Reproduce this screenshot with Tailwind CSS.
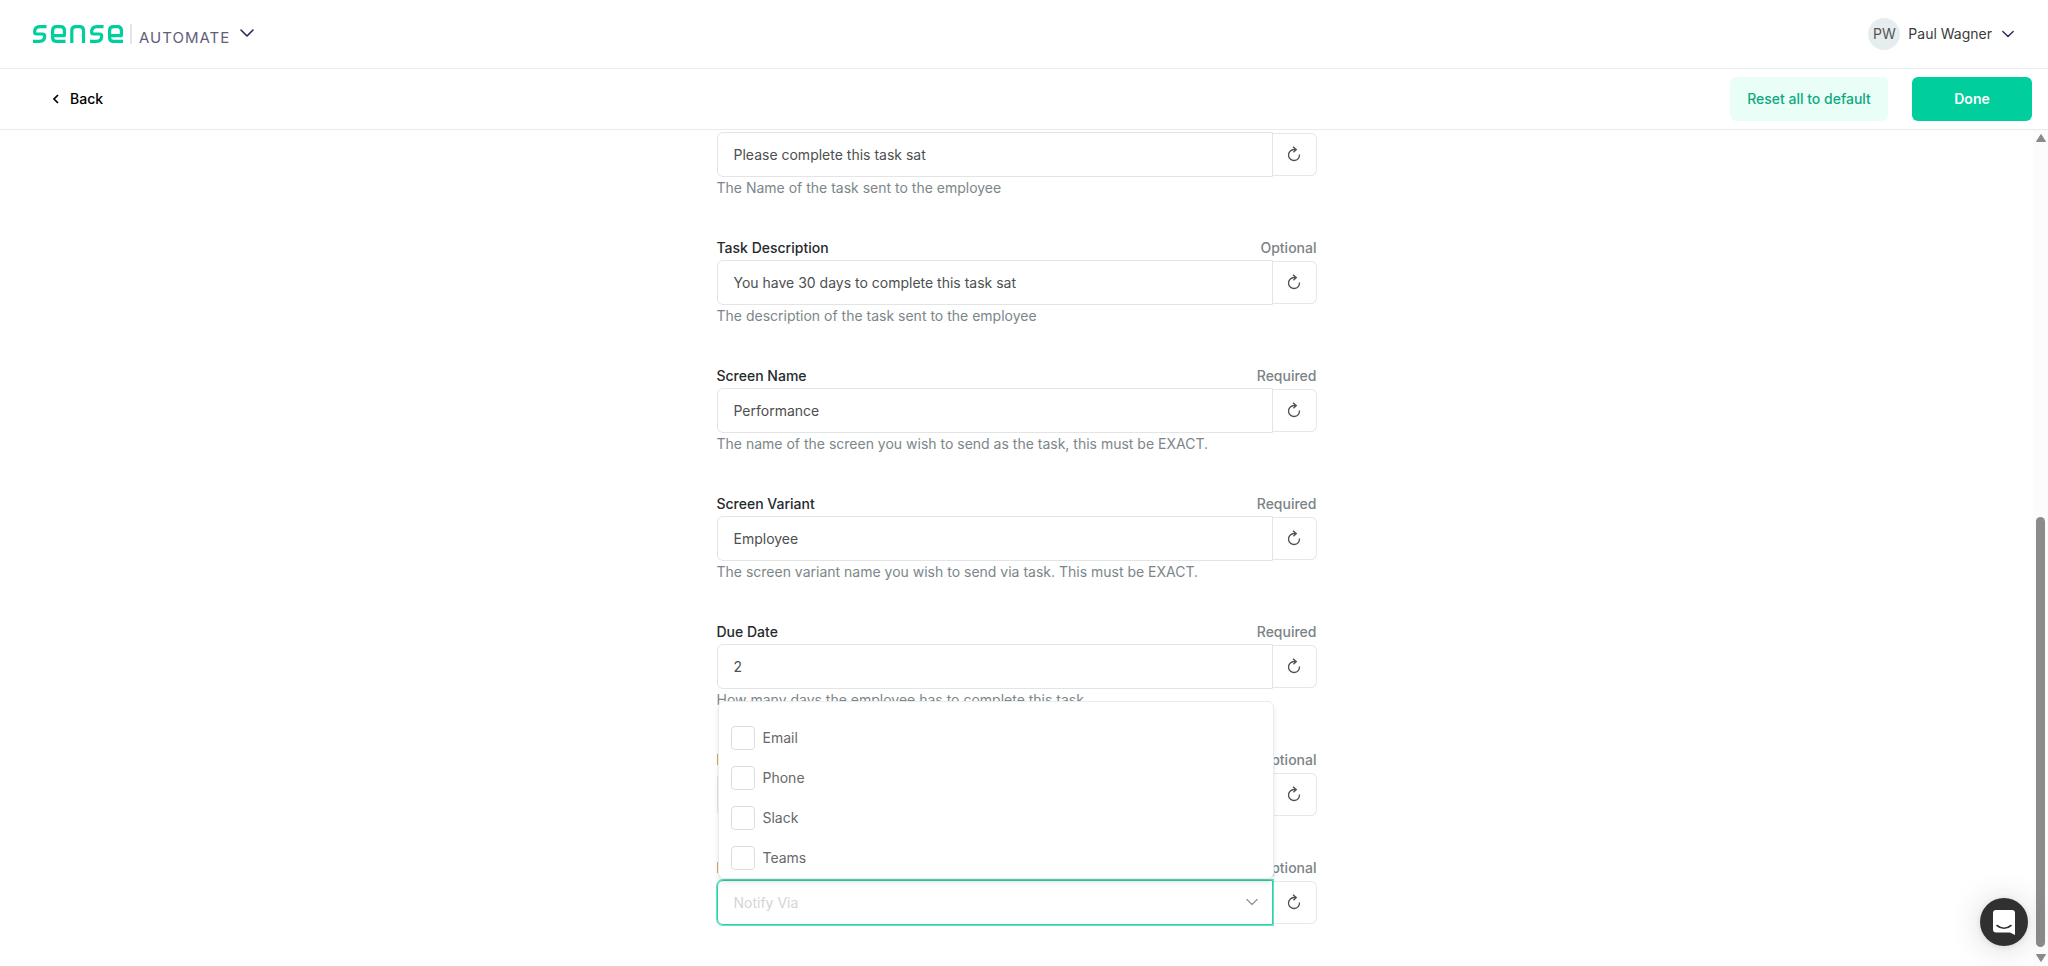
<!DOCTYPE html>
<html lang="en">
<head>
    <meta charset="UTF-8">
    <meta name="viewport" content="width=device-width, initial-scale=1.0">
    <title>Sense Automate</title>
    <script src="https://cdn.jsdelivr.net/npm/@tailwindcss/browser@4"></script>
</head>
<body class="bg-white font-['Inter',sans-serif] text-sm text-[#4d4f50]">
    <!-- shared icons -->
    <svg class="hidden">
        <symbol id="reset" viewBox="0 0 14 16">
            <path d="M8.500 3.500H7A5.500 5.500 0 1 0 12.500 8.500" fill="none" stroke="currentColor" stroke-width="1.3"/>
            <path d="M6 .8 9.200 3.500 6.500 6.200" fill="none" stroke="currentColor" stroke-width="1.4"/>
        </symbol>
        <symbol id="chevron" viewBox="0 0 14 8">
            <path d="M1 1l6 6 6-6" fill="none" stroke="currentColor" stroke-width="1.6" stroke-linecap="round" stroke-linejoin="round"/>
        </symbol>
    </svg>

    <div class="flex flex-col h-screen overflow-hidden">
        <header class="flex items-center justify-between h-[69px] shrink-0 border-b border-[#e5eef2] pl-8 pr-[34px]">
            <button class="flex items-center" aria-label="Switch product">
                <svg class="w-[92px] h-5" viewBox="0 0 92 20" fill="none" stroke="#00ce9c" stroke-width="3.2" stroke-linejoin="round">
                    <path d="M14.500 2.600H8Q2.600 2.600 2.600 8Q2.600 10 4.800 10H10.500Q12.700 10 12.700 12Q12.700 17.400 7.500 17.400H1"/>
                    <path d="M21 11.600H32.400V6.500Q32.400 2.600 28.500 2.600H24.500Q20.600 2.600 20.600 6.500V13.500Q20.600 17.400 24.500 17.400H33.500"/>
                    <path d="M39.800 19V6.500Q39.800 2.600 43.700 2.600H47.600Q51.500 2.600 51.500 6.500V19"/>
                    <path d="M71.500 2.600H65Q59.600 2.600 59.600 8Q59.600 10 61.800 10H67.500Q69.700 10 69.700 12Q69.700 17.400 64.500 17.400H58"/>
                    <path d="M78 11.600H89.400V6.500Q89.400 2.600 85.500 2.600H81.500Q77.600 2.600 77.600 6.500V13.500Q77.600 17.400 81.500 17.400H91"/>
                </svg>
                <span class="ml-1.5 w-0.5 h-5 bg-[#e4e4ec]"></span>
                <span class="ml-[7px] mt-2 text-[15px] leading-5 tracking-[1px] text-[#625d7a]">AUTOMATE</span>
                <svg class="ml-2.5 mb-0.5 w-3.5 h-2 text-[#2d2653]"><use href="#chevron"/></svg>
            </button>
            <button class="flex items-center text-[#3b3b3b]">
                <span class="flex items-center justify-center size-8 rounded-full bg-[#e5edef] text-[#555]">PW</span>
                <span class="ml-2">Paul Wagner</span>
                <svg class="ml-2.5 w-3 h-2 text-[#2d2653]"><use href="#chevron"/></svg>
            </button>
        </header>

        <nav class="flex items-center justify-between h-[61px] shrink-0 border-b border-[#e8eaeb] pl-[52px] pr-4">
            <a href="#" class="flex items-center gap-[11px] font-medium text-black">
                <svg class="w-[7px] h-2.5" viewBox="0 0 7 10"><path d="M6 1 2 5l4 4" fill="none" stroke="currentColor" stroke-width="1.7"/></svg>
                Back
            </a>
            <div class="flex gap-6">
                <button class="h-11 w-[158px] rounded-md bg-[#e9fef6] font-medium text-[#0fa981]">Reset all to default</button>
                <button class="h-11 w-[120px] rounded-md bg-[#00ce9c] font-semibold text-white">Done</button>
            </div>
        </nav>

        <div class="flex flex-1 min-h-0">
            <main class="flex flex-1 flex-col justify-end items-center overflow-hidden pb-[41px]">
                <form class="w-full max-w-[600px] leading-[22px]">
                    <div class="mb-[38px]">
                        <div class="flex items-center">
                            <input id="taskName" type="text" aria-label="Task Name" value="Please complete this task sat" class="flex-1 h-[45px] rounded-l-md border border-[#e3e4e4] px-4">
                            <button type="button" aria-label="Reset" class="flex items-center justify-center w-11 h-[43px] rounded-r-md border border-l-0 border-[#e6e7e7] pb-0.5"><svg class="w-3.5 h-4"><use href="#reset"/></svg></button>
                        </div>
                        <p class="text-[#7c8689]">The Name of the task sent to the employee</p>
                    </div>

                    <div class="mb-[38px]">
                        <div class="flex justify-between mb-px"><label for="taskDescription" class="font-medium text-[#262a2c]">Task Description</label><span class="font-medium text-[#7c8386]">Optional</span></div>
                        <div class="flex items-center">
                            <input id="taskDescription" type="text" value="You have 30 days to complete this task sat" class="flex-1 h-[45px] rounded-l-md border border-[#e3e4e4] px-4">
                            <button type="button" aria-label="Reset" class="flex items-center justify-center w-11 h-[43px] rounded-r-md border border-l-0 border-[#e6e7e7] pb-0.5"><svg class="w-3.5 h-4"><use href="#reset"/></svg></button>
                        </div>
                        <p class="text-[#7c8689]">The description of the task sent to the employee</p>
                    </div>

                    <div class="mb-[38px]">
                        <div class="flex justify-between mb-px"><label for="screenName" class="font-medium text-[#262a2c]">Screen Name</label><span class="font-medium text-[#7c8386]">Required</span></div>
                        <div class="flex items-center">
                            <input id="screenName" type="text" value="Performance" class="flex-1 h-[45px] rounded-l-md border border-[#e3e4e4] px-4">
                            <button type="button" aria-label="Reset" class="flex items-center justify-center w-11 h-[43px] rounded-r-md border border-l-0 border-[#e6e7e7] pb-0.5"><svg class="w-3.5 h-4"><use href="#reset"/></svg></button>
                        </div>
                        <p class="text-[#7c8689]">The name of the screen you wish to send as the task, this must be EXACT.</p>
                    </div>

                    <div class="mb-[38px]">
                        <div class="flex justify-between mb-px"><label for="screenVariant" class="font-medium text-[#262a2c]">Screen Variant</label><span class="font-medium text-[#7c8386]">Required</span></div>
                        <div class="flex items-center">
                            <input id="screenVariant" type="text" value="Employee" class="flex-1 h-[45px] rounded-l-md border border-[#e3e4e4] px-4">
                            <button type="button" aria-label="Reset" class="flex items-center justify-center w-11 h-[43px] rounded-r-md border border-l-0 border-[#e6e7e7] pb-0.5"><svg class="w-3.5 h-4"><use href="#reset"/></svg></button>
                        </div>
                        <p class="text-[#7c8689]">The screen variant name you wish to send via task. This must be EXACT.</p>
                    </div>

                    <div class="mb-[38px]">
                        <div class="flex justify-between mb-px"><label for="dueDate" class="font-medium text-[#262a2c]">Due Date</label><span class="font-medium text-[#7c8386]">Required</span></div>
                        <div class="flex items-center">
                            <input id="dueDate" type="text" value="2" class="flex-1 h-[45px] rounded-l-md border border-[#e3e4e4] px-4">
                            <button type="button" aria-label="Reset" class="flex items-center justify-center w-11 h-[43px] rounded-r-md border border-l-0 border-[#e6e7e7] pb-0.5"><svg class="w-3.5 h-4"><use href="#reset"/></svg></button>
                        </div>
                        <p class="text-[#7c8689]">How many days the employee has to complete this task</p>
                    </div>

                    <div class="mb-10">
                        <div class="flex justify-between mb-px"><label for="reminder" class="font-medium text-[#262a2c]">Reminder</label><span class="font-medium text-[#7c8386]">Optional</span></div>
                        <div class="flex items-center">
                            <input id="reminder" type="text" class="flex-1 h-[45px] rounded-l-md border border-[#e3e4e4] px-4">
                            <button type="button" aria-label="Reset" class="flex items-center justify-center w-11 h-[43px] rounded-r-md border border-l-0 border-[#e6e7e7] pb-0.5"><svg class="w-3.5 h-4"><use href="#reset"/></svg></button>
                        </div>
                    </div>

                    <div>
                        <div class="flex justify-between mb-px"><label for="notifyVia" class="font-medium text-[#262a2c]">Notify Via</label><span class="font-medium text-[#7c8386]">Optional</span></div>
                        <div class="flex items-center">
                            <div class="relative flex-1">
                                <select id="notifyVia" class="block w-full h-[45px] appearance-none rounded-l-md border border-[#2ad3a9] px-4 text-[#d3d5d6] ring-1 ring-[#2ad3a9]/70">
                                    <option>Notify Via</option>
                                </select>
                                <svg class="absolute right-[15px] top-[18px] w-3 h-2 text-[#999] pointer-events-none"><use href="#chevron"/></svg>
                                <!-- options open upwards -->
                                <div class="absolute left-px -right-px bottom-full mb-px flex flex-col gap-4 rounded-md border border-[#e8eeef] bg-white px-3 pt-6 pb-2 text-[#66696b] shadow-md">
                                    <label class="flex items-center gap-2 h-6"><input type="checkbox" class="size-6 appearance-none rounded border border-[#dcdddd] bg-white">Email</label>
                                    <label class="flex items-center gap-2 h-6"><input type="checkbox" class="size-6 appearance-none rounded border border-[#dcdddd] bg-white">Phone</label>
                                    <label class="flex items-center gap-2 h-6"><input type="checkbox" class="size-6 appearance-none rounded border border-[#dcdddd] bg-white">Slack</label>
                                    <label class="flex items-center gap-2 h-6"><input type="checkbox" class="size-6 appearance-none rounded border border-[#dcdddd] bg-white">Teams</label>
                                </div>
                            </div>
                            <button type="button" aria-label="Reset" class="flex items-center justify-center w-11 h-[43px] rounded-r-md border border-l-0 border-[#e6e7e7] pb-0.5"><svg class="w-3.5 h-4"><use href="#reset"/></svg></button>
                        </div>
                    </div>
                </form>
            </main>

            <!-- scrollbar -->
            <div class="flex flex-col items-center w-[15px] py-1 bg-[#fcfcfc]">
                <svg class="w-2.5 h-2" viewBox="0 0 10 8"><path d="M5 .5 9.500 7.500H.5z" fill="#8b8b8b" stroke="#8b8b8b" stroke-linejoin="round"/></svg>
                <div class="flex-1"></div>
                <div class="w-[9px] h-[430px] rounded-full bg-[#8b8b8b]"></div>
                <svg class="mt-[7px] w-2.5 h-2" viewBox="0 0 10 8"><path d="M5 7.500 9.500.5H.5z" fill="#8b8b8b" stroke="#8b8b8b" stroke-linejoin="round"/></svg>
            </div>
        </div>
    </div>

    <button aria-label="Open chat" class="fixed right-5 bottom-5 flex items-center justify-center size-12 rounded-full bg-[#303030] shadow-[0_1px_6px_rgba(0,0,0,0.1),0_2px_32px_rgba(0,0,0,0.16)]">
        <svg class="w-[22px] h-[25px]" viewBox="0 0 22 25">
            <path d="M3 0h16a3 3 0 0 1 3 3v22l-5-2.500H3a3 3 0 0 1-3-3V3a3 3 0 0 1 3-3z" fill="#fff"/>
            <path d="M4 15.500q7 5.500 14 0" fill="none" stroke="#303030" stroke-width="1.6" stroke-linecap="round"/>
        </svg>
    </button>
</body>
</html>
